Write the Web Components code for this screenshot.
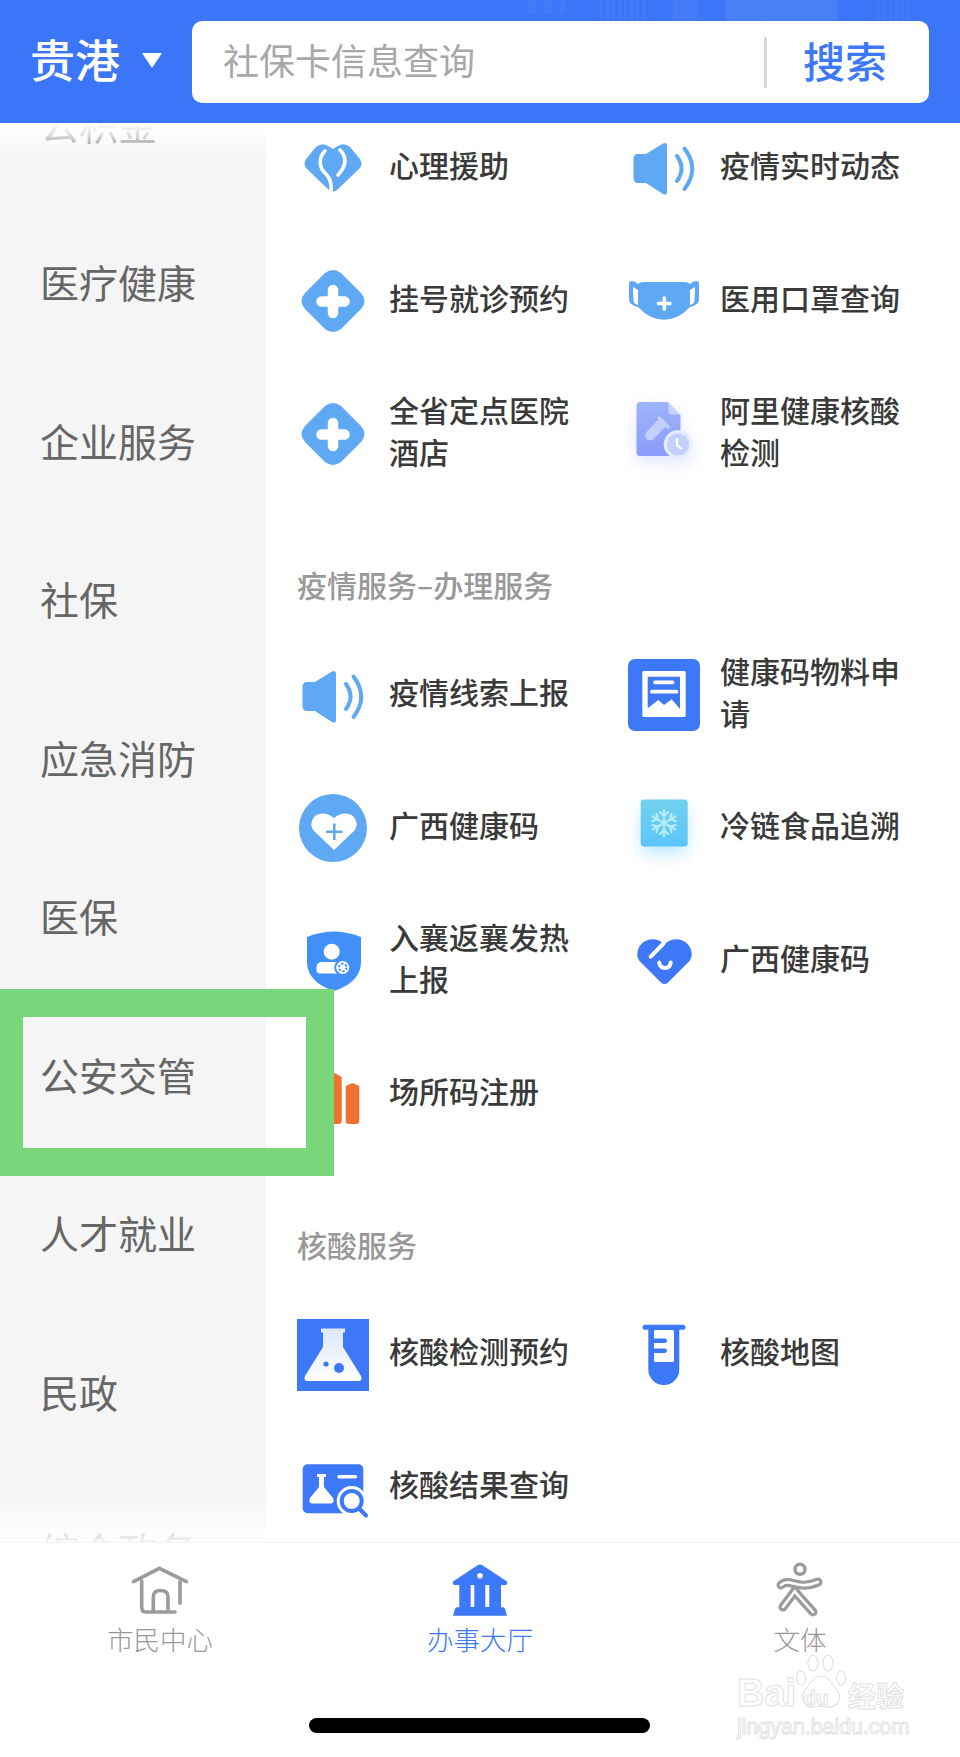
<!DOCTYPE html>
<html lang="zh-CN">
<head>
<meta charset="utf-8">
<title>办事大厅</title>
<style>
  html, body { margin: 0; padding: 0; background: #fff; }
  body { font-family: "Noto Sans CJK SC", "Noto Sans", sans-serif; }
</style>
</head>
<body>
<gov-app>
  <app-header slot="header"></app-header>
  <side-nav slot="side">
    <nav-entry>公积金</nav-entry>
    <nav-entry>医疗健康</nav-entry>
    <nav-entry>企业服务</nav-entry>
    <nav-entry>社保</nav-entry>
    <nav-entry>应急消防</nav-entry>
    <nav-entry>医保</nav-entry>
    <nav-entry>公安交管</nav-entry>
    <nav-entry>人才就业</nav-entry>
    <nav-entry>民政</nav-entry>
    <nav-entry>综合政务</nav-entry>
  </side-nav>
  <service-list slot="main">
    <service-group>
      <service-item icon="heartleaf">心理援助</service-item>
      <service-item icon="speaker">疫情实时动态</service-item>
      <service-item icon="plus">挂号就诊预约</service-item>
      <service-item icon="mask">医用口罩查询</service-item>
      <service-item icon="plus">全省定点医院酒店</service-item>
      <service-item icon="doc">阿里健康核酸检测</service-item>
    </service-group>
    <service-group heading="疫情服务–办理服务">
      <service-item icon="speaker" nudge="2">疫情线索上报</service-item>
      <service-item icon="poster" nudge="1">健康码物料申请</service-item>
      <service-item icon="heartcircle" nudge="1">广西健康码</service-item>
      <service-item icon="snow" nudge="1">冷链食品追溯</service-item>
      <service-item icon="shield">入襄返襄发热上报</service-item>
      <service-item icon="heart">广西健康码</service-item>
      <service-item icon="bars">场所码注册</service-item>
    </service-group>
    <service-group heading="核酸服务">
      <service-item icon="flask" nudge="1">核酸检测预约</service-item>
      <service-item icon="tube" nudge="1">核酸地图</service-item>
      <service-item icon="result">核酸结果查询</service-item>
    </service-group>
  </service-list>
  <tab-bar slot="tabs">
    <tab-entry icon="home">市民中心</tab-entry>
    <tab-entry icon="bank" active>办事大厅</tab-entry>
    <tab-entry icon="runner">文体</tab-entry>
  </tab-bar>
  <mark-box slot="over"></mark-box>
  <baidu-mark slot="over"></baidu-mark>
</gov-app>

<script>
const SKY = "#5fa8f3";
const BLUE = "#3c78f8";

const flakeArm = `<g stroke="#b4ecf6" stroke-width="2.4" stroke-linecap="round" fill="none"><path d="M36 31V18"/><path d="M32 20l4 4 4-4"/></g>`;
const flake = [0, 60, 120, 180, 240, 300]
  .map(a => `<g transform="rotate(${a} 36 31)">${flakeArm}</g>`).join("");

const ICONS = {
  heartleaf: `<path fill="${SKY}" d="M19 15Q25 10 31 14L36 17L41 14Q47 10 53 15L63 27Q66 32 63 36L40 58Q36 61 32 58L9 36Q6 32 9 27Z"/>
    <path fill="none" stroke="#fff" stroke-width="3.6" stroke-linecap="round" d="M28 19C21 26 22 36 29 42C33 46 35 51 34 60M43 18C50 25 50 33 41 43"/>`,
  speaker: `<path fill="${SKY}" d="M10 22H18L35 11.5Q39 10 39 14V60Q39 64 35 62L18 51H10Q5.500 51 5.500 46V27Q5.500 22 10 22Z"/>
    <path fill="none" stroke="${SKY}" stroke-width="4" stroke-linecap="round" d="M49 24Q58 36.700 49 49M56.500 16.500Q72 36.700 56.500 57"/>`,
  plus: `<path fill="${SKY}" d="M28 8Q36 2 44 8L64 28Q71 36 64 44L44 64Q36 70 28 64L8 44Q1 36 8 28Z"/>
    <path fill="none" stroke="#fff" stroke-width="10.500" stroke-linecap="round" d="M24.500 36.500H47.500M36 25V48"/>`,
  mask: `<path fill="${SKY}" d="M4 16Q7 16 10 19Q12 17 16 17H56Q60 17 62 19Q65 16 68 16Q71 16 71 19V34Q71 40 62 42Q50 54.700 36 54.700Q22 54.700 10 42Q1 40 1 34V19Q1 16 4 16Z"/>
    <path fill="#fff" d="M5 22L10 25V40Q5.500 39 5.500 35ZM67 22L62 25V40Q66.500 39 66.500 35Z"/>
    <path fill="none" stroke="#fff" stroke-width="3.600" stroke-linecap="round" d="M30.500 38.500H42M36.300 33V44"/>`,
  doc: `<defs><linearGradient id="d" x1="0" y1="0" x2="0" y2="1"><stop offset="0" stop-color="#9fb3fb"/><stop offset="1" stop-color="#8a9bfa"/></linearGradient></defs>
    <path fill="url(#d)" d="M12 4H40L52.500 17V54Q52.500 58 48.500 58H12Q8.500 58 8.500 54V8Q8.500 4 12 4Z"/>
    <path fill="#c9d3fd" d="M40.500 4.500L52 16.500H44Q40.500 16.500 40.500 13Z"/>
    <path fill="none" stroke="#c3cefd" stroke-width="10" stroke-linecap="round" d="M22 37.500L33 26"/>
    <path fill="none" stroke="#c3cefd" stroke-width="3.500" stroke-linecap="round" d="M31 20L40 29"/>
    <circle cx="50" cy="46.500" r="14.300" fill="#e6ebff"/><circle cx="50" cy="46.500" r="11" fill="#c5d0fe"/>
    <path fill="none" stroke="#fff" stroke-width="2.200" stroke-linecap="round" d="M49 41V47L53 50.500"/>`,
  poster: `<rect width="72" height="72" rx="7" fill="${BLUE}"/><rect x="14.300" y="12" width="43.400" height="46" rx="1.500" fill="#fff"/>
    <path fill="${BLUE}" d="M19.700 17.700H52V50L43.700 40.300L36 46L30.300 41L19.700 49.300Z"/>
    <path fill="none" stroke="#fff" stroke-width="3.800" stroke-linecap="round" d="M27 23.300H44.500M24 32.700H48.500"/>`,
  heartcircle: `<circle cx="36" cy="36" r="34" fill="${SKY}"/>
    <path fill="#fff" d="M37 58L17 39Q13 34 15 29C17 22 27 18 37 26C47 18 57 22 59 29Q61 34 57 39Z"/>
    <path fill="none" stroke="${SKY}" stroke-width="2.600" d="M29 39.700H45.500M37.300 31.500V48"/>`,
  snow: `<defs><linearGradient id="s" x1="0" y1="0" x2="0" y2="1"><stop offset="0" stop-color="#71d1ec"/><stop offset="1" stop-color="#5bc4fc"/></linearGradient></defs>
    <rect x="12.700" y="7.500" width="47" height="47" rx="3.500" fill="url(#s)"/>${flake}`,
  shield: `<path fill="#4090f8" d="M10 13Q24 7.500 37 7.500Q50 7.500 64 13V38Q64 58 37 67Q10 58 10 38Z"/>
    <circle cx="34.700" cy="27.700" r="8" fill="#fff"/>
    <path fill="#fff" d="M25 38H42Q46 38 46 43V49.500H23Q19.500 49.500 19.500 46V43.500Q19.500 38 25 38Z"/>
    <circle cx="45.700" cy="43.500" r="8.500" fill="#4090f8"/><circle cx="45.700" cy="43.500" r="6.500" fill="#fff"/>
    <circle cx="45.700" cy="43.500" r="3.800" fill="none" stroke="#4090f8" stroke-width="2" stroke-dasharray="2.200 1.800"/>`,
  heart: `<path fill="${BLUE}" d="M36.500 60Q34.500 60 33 58.500L11.500 37Q8 32 10 26C12 18 24 10 36.500 20C49 10 61 18 63 26Q65 32 61.500 37L40 58.500Q38.500 60 36.500 60Z"/>
    <path fill="none" stroke="#fff" stroke-width="4" stroke-linecap="round" d="M22.700 32.700L35.500 19.500M31.200 38.500Q32 44 37 44Q42 44 42.700 38.500"/>`,
  bars: `<path fill="#f07032" d="M14 30Q20 21 26 30V67H14ZM30 22L37 15.700L44.700 20V64Q44.700 67 41.700 67H30ZM48.700 29L55.500 26L62.300 29V64Q62.300 67 59.300 67H51.700Q48.700 67 48.700 64Z"/>`,
  flask: `<rect width="72" height="72" fill="${BLUE}"/>
    <defs><linearGradient id="f" x1="0" y1="0" x2="0" y2="1"><stop offset="0" stop-color="#dde8fb"/><stop offset="1" stop-color="#fff"/></linearGradient></defs>
    <path fill="url(#f)" d="M24 9.500H48V13.500H46V28L64 57Q66 62 61 62H11Q6 62 8 57L26 28V13.500H24Z"/>
    <circle cx="29" cy="45" r="2.600" fill="${BLUE}"/><circle cx="42" cy="49" r="5" fill="${BLUE}"/>`,
  tube: `<path fill="${BLUE}" d="M20.300 8H51.300V50.500A15.500 15.500 0 0 1 20.300 50.500Z"/>
    <path fill="none" stroke="${BLUE}" stroke-width="5" stroke-linecap="round" d="M17 8.300H55"/>
    <rect x="26" y="11" width="20" height="32" rx="1.500" fill="#fff"/>
    <path fill="none" stroke="${BLUE}" stroke-width="4.600" stroke-linecap="round" d="M26 21.700H36.700M26 31.700H36.700"/>`,
  result: `<rect x="5.700" y="13.300" width="60.600" height="49" rx="5" fill="${BLUE}"/>
    <path fill="#fff" d="M20 23H29V26H27V36L36 47Q38 52 34 52.500H15Q11 52 13 47L22 36V26H20Z"/>
    <path fill="none" stroke="#fff" stroke-width="3.400" stroke-linecap="round" d="M42 25.700H58.500"/>
    <circle cx="54.700" cy="50" r="15" fill="#fff"/><circle cx="54.700" cy="50" r="10" fill="#fff" stroke="${BLUE}" stroke-width="4"/>
    <path fill="none" stroke="${BLUE}" stroke-width="4" stroke-linecap="round" d="M62 57.500L69 64.500"/>`,
  home: `<g fill="none" stroke="#9b9b9b" stroke-width="3.600" stroke-linecap="round" stroke-linejoin="round">
    <path d="M3.500 21.700L29.300 8.300L56.500 21.700"/><path d="M11.700 21V47.500Q11.700 52 16 52H45"/><path d="M50 21.700V43.300"/>
    <path d="M23.300 51V37Q23.300 30.500 30.500 30.500Q38 30.500 38 37V51"/></g>`,
  bank: `<path fill="${BLUE}" d="M28 5Q30 3.800 32 5L57 21.500Q58 23.500 56 25H4Q2 23.500 3 21.500Z"/>
    <path fill="${BLUE}" d="M9.300 25H20.700V47H24.300V25H35.300V47H39.300V25H51V47.300H53Q54.500 47.300 55 49L57 55.700H3L5 49Q5.500 47.300 7 47.300H9.300Z"/>
    <circle cx="30" cy="15.700" r="2.800" fill="#fff"/>`,
  runner: `<circle cx="30" cy="9.300" r="5" fill="none" stroke="#9b9b9b" stroke-width="3.400"/>
    <g fill="none" stroke="#9b9b9b" stroke-width="9" stroke-linecap="round" stroke-linejoin="round">
      <path d="M11 25C20 17 27 31 48 22"/><path d="M25 31L13 47"/><path d="M26 33L43 52"/></g>
    <g fill="none" stroke="#fff" stroke-width="2.600" stroke-linecap="round" stroke-linejoin="round">
      <path d="M11 25C20 17 27 31 48 22"/><path d="M25 31L13 47"/><path d="M26 33L43 52"/></g>`
};

class GovApp extends HTMLElement {
  constructor() {
    super();
    this.attachShadow({ mode: "open" }).innerHTML = `
    <style>
      :host { display: flex; flex-direction: column; position: relative; width: 960px; height: 1757px; overflow: hidden; background: #fff; }
      .body { flex: 1; min-height: 0; display: grid; grid-template-columns: 266px 1fr; overflow: hidden; }
    </style>
    <slot name="header"></slot>
    <div class="body"><slot name="side"></slot><slot name="main"></slot></div>
    <slot name="tabs"></slot>
    <slot name="over"></slot>`;
  }
}

class AppHeader extends HTMLElement {
  constructor() {
    super();
    this.attachShadow({ mode: "open" }).innerHTML = `
    <style>
      :host {
        display: flex; align-items: center; box-sizing: border-box; height: 123px; padding: 21px 31px 20px 30px;
        color: #fff;
        background-color: #3b76f8;
        background-image:
          repeating-linear-gradient(90deg, rgba(255,255,255,.04) 0 8px, transparent 8px 16px),
          repeating-linear-gradient(90deg, rgba(255,255,255,.04) 0 3px, transparent 3px 6px),
          linear-gradient(rgba(255,255,255,.04), rgba(255,255,255,.04)),
          linear-gradient(rgba(255,255,255,.07), rgba(255,255,255,.07)),
          repeating-linear-gradient(90deg, rgba(255,255,255,.03) 0 3px, transparent 3px 6px);
        background-repeat: no-repeat;
        background-size: 37px 14px, 48px 21px, 24px 21px, 112px 21px, 33px 21px;
        background-position: 528px 0, 600px 0, 673px 0, 725px 0, 877px 0;
      }
      .city { font-size: 45px; font-weight: 500; line-height: 60px; width: 112px; padding-bottom: 6px; white-space: nowrap; }
      .tri { width: 0; height: 0; border-left: 10px solid transparent; border-right: 10px solid transparent; border-top: 15px solid #fff; margin: -3px 0 0 0; }
      .box { margin-left: 30px; flex: 1; height: 82px; background: #fff; border-radius: 10px; display: flex; align-items: center; padding-left: 31px; }
      .hint { flex: 1; font-size: 36px; color: #a8a8a8; padding-bottom: 6px; }
      .sep { width: 3px; height: 51px; background: #d8d8d8; }
      .go { box-sizing: border-box; width: 162px; padding: 0 6px 6px 0; text-align: center; font-size: 42px; font-weight: 500; color: ${BLUE}; }
    </style>
    <div class="city">贵港</div><div class="tri"></div>
    <div class="box"><div class="hint">社保卡信息查询</div><div class="sep"></div><div class="go">搜索</div></div>`;
  }
}

class SideNav extends HTMLElement {
  constructor() {
    super();
    this.attachShadow({ mode: "open" }).innerHTML = `
    <style>
      :host { display: block; position: relative; background: #f5f5f5; overflow: hidden; }
      .list { margin-top: -76px; }
      .fade-top, .fade-bottom { position: absolute; left: 0; right: 0; pointer-events: none; }
      .fade-top { top: 0; height: 36px; background: linear-gradient(#fff 0%, rgba(255,255,255,.8) 30%, rgba(245,245,245,0)); }
      .fade-bottom { bottom: 0; height: 50px; background: linear-gradient(rgba(255,255,255,0), rgba(255,255,255,.93)); }
    </style>
    <div class="list"><slot></slot></div>
    <div class="fade-top"></div><div class="fade-bottom"></div>`;
  }
}

class NavEntry extends HTMLElement {
  constructor() {
    super();
    this.attachShadow({ mode: "open" }).innerHTML = `
    <style>
      :host { display: flex; align-items: center; box-sizing: border-box; height: 158.500px; padding: 0 0 7px 40px; font-size: 39px; color: #666; }
    </style><slot></slot>`;
  }
}

class ServiceList extends HTMLElement {
  constructor() {
    super();
    this.attachShadow({ mode: "open" }).innerHTML = `
    <style>
      :host { display: block; overflow: hidden; background: #fff; }
      .inner { margin-top: -22px; padding-left: 31px; }
    </style><div class="inner"><slot></slot></div>`;
  }
}

class ServiceGroup extends HTMLElement {
  constructor() {
    super();
    const heading = this.getAttribute("heading");
    this.attachShadow({ mode: "open" }).innerHTML = `
    <style>
      :host { display: block; }
      h2 { margin: 63px 0 22.500px; font-size: 30px; line-height: 42px; font-weight: 500; color: #999; }
      .grid { display: grid; grid-template-columns: 331px 331px; }
    </style>
    ${heading ? `<h2>${heading}</h2>` : ""}
    <div class="grid"><slot></slot></div>`;
  }
}

class ServiceItem extends HTMLElement {
  constructor() {
    super();
    const nudge = this.getAttribute("nudge") || 0;
    this.attachShadow({ mode: "open" }).innerHTML = `
    <style>
      :host { display: flex; align-items: center; gap: 20px; height: 133px; }
      svg { flex: none; width: 72px; height: 72px; overflow: visible; transform: translateY(${nudge}px); }
      svg.doc { filter: drop-shadow(0 6px 8px rgba(138,155,250,.25)); }
      svg.snow { filter: drop-shadow(0 8px 8px rgba(91,196,252,.35)); }
      .label { width: 183px; padding-bottom: 7px; font-size: 30px; line-height: 42px; font-weight: 500; color: #3a3a3a; }
    </style>
    <svg class="${this.getAttribute("icon")}" viewBox="0 0 72 72">${ICONS[this.getAttribute("icon")]}</svg>
    <div class="label"><slot></slot></div>`;
  }
}

class TabBar extends HTMLElement {
  constructor() {
    super();
    this.attachShadow({ mode: "open" }).innerHTML = `
    <style>
      :host { display: block; height: 215px; box-sizing: border-box; border-top: 1px solid #f4f4f4; background: #fff; position: relative; }
      .tabs { display: grid; grid-template-columns: repeat(3, 1fr); height: 175px; }
      .home-bar { width: 341px; height: 15px; border-radius: 7.500px; background: #000; margin-left: 309px; }
    </style>
    <div class="tabs"><slot></slot></div><div class="home-bar"></div>`;
  }
}

class TabEntry extends HTMLElement {
  constructor() {
    super();
    this.attachShadow({ mode: "open" }).innerHTML = `
    <style>
      :host { display: flex; flex-direction: column; align-items: center; padding-top: 17px; font-size: 26.500px; line-height: 36px; font-weight: 300; color: #999; }
      :host([active]) { color: ${BLUE}; }
      svg { width: 60px; height: 60px; margin-bottom: 1px; overflow: visible; }
    </style>
    <svg viewBox="0 0 60 60">${ICONS[this.getAttribute("icon")]}</svg><slot></slot>`;
  }
}

// green annotation frame laid over the screenshot
class MarkBox extends HTMLElement {
  constructor() {
    super();
    this.attachShadow({ mode: "open" }).innerHTML = `
    <style>
      :host { position: absolute; left: 0; top: 989px; width: 334px; height: 187px; box-sizing: border-box; border: 28px solid #7ad67a; border-left-width: 23px; }
    </style>`;
  }
}

class BaiduMark extends HTMLElement {
  constructor() {
    super();
    this.attachShadow({ mode: "open" }).innerHTML = `
    <style>
      :host { position: absolute; left: 737px; top: 1654px; width: 172px; height: 84px; font-family: "Liberation Sans", sans-serif; color: transparent; -webkit-text-stroke: 1px #e2e2e2; pointer-events: none; }
      div, svg { position: absolute; white-space: nowrap; }
      .bai { left: 0; top: 17px; font-size: 38px; line-height: 44px; font-weight: 700; }
      .du { left: 66px; top: 32px; font-size: 21px; line-height: 24px; font-weight: 700; }
      .jy { left: 111px; top: 24px; font-size: 28px; line-height: 34px; font-family: "Noto Sans CJK SC", sans-serif; font-weight: 700; }
      .url { left: 0; top: 61px; font-size: 22px; line-height: 24px; letter-spacing: -.3px; }
      svg { left: 58px; top: 0; }
    </style>
    <svg width="54" height="56" viewBox="0 0 54 56" fill="none" stroke="#e2e2e2" stroke-width="1.200">
      <ellipse cx="6" cy="24" rx="4.500" ry="7"/><ellipse cx="18" cy="9" rx="5" ry="8"/><ellipse cx="33" cy="9" rx="5" ry="8"/><ellipse cx="46" cy="24" rx="4.500" ry="7"/>
      <path d="M26 22C18 22 16 30 10 36C4 44 10 54 20 53C24 52 28 52 32 53C42 54 48 44 42 36C36 30 34 22 26 22Z"/>
    </svg>
    <div class="bai">Bai</div><div class="du">du</div><div class="jy">经验</div><div class="url">jingyan.baidu.com</div>`;
  }
}

customElements.define("gov-app", GovApp);
customElements.define("app-header", AppHeader);
customElements.define("side-nav", SideNav);
customElements.define("nav-entry", NavEntry);
customElements.define("service-list", ServiceList);
customElements.define("service-group", ServiceGroup);
customElements.define("service-item", ServiceItem);
customElements.define("tab-bar", TabBar);
customElements.define("tab-entry", TabEntry);
customElements.define("mark-box", MarkBox);
customElements.define("baidu-mark", BaiduMark);
</script>
</body>
</html>
